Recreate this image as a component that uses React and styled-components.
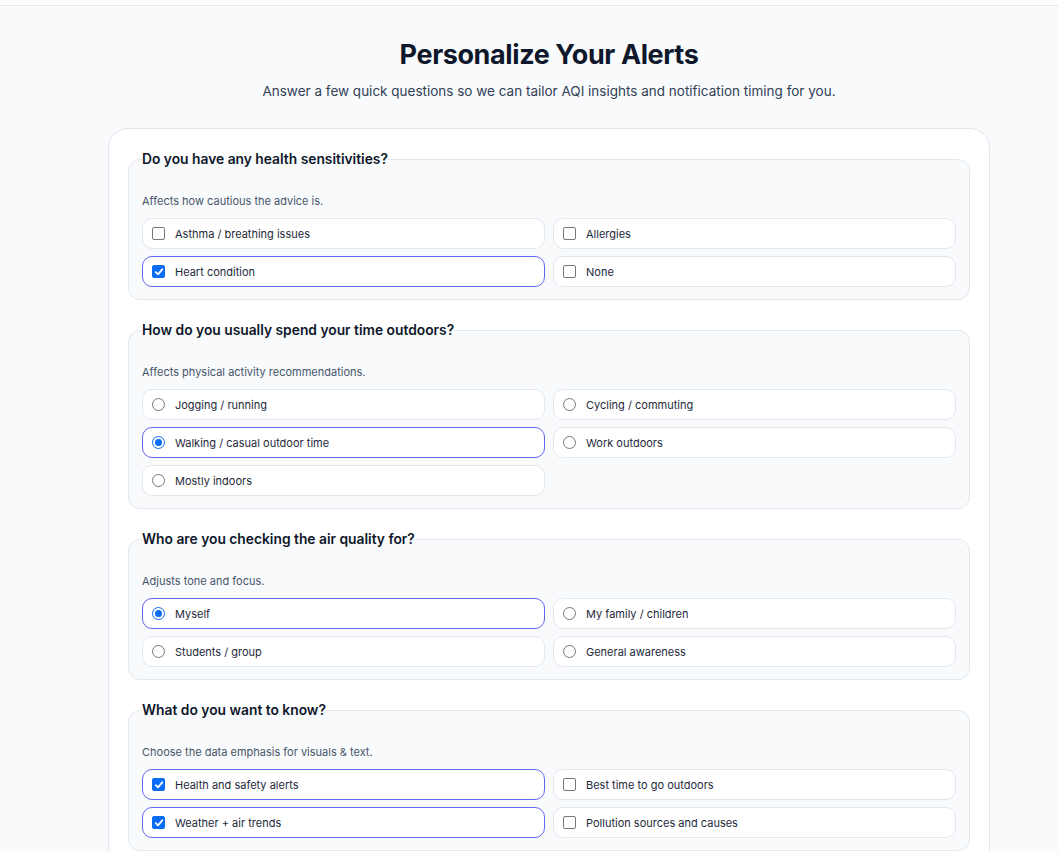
import styled, { createGlobalStyle } from "styled-components";

const GlobalStyle = createGlobalStyle`
  html, body {
    margin: 0;
    padding: 0;
    background: #f8fafc;
    font-family: Inter, "Noto Sans", "Liberation Sans", sans-serif;
    color: #0f172a;
  }
  * {
    box-sizing: border-box;
  }
`;

const TopBar = styled.header`
  height: 6px;
  background: #ffffff;
  border-bottom: 1px solid #e2e8f0;
`;

const Main = styled.main`
  padding: 31px 0 0 40px;
`;

const Title = styled.h1`
  margin: 0;
  text-align: center;
  font-size: 27px;
  line-height: 36px;
  font-weight: 700;
  letter-spacing: -0.4px;
  color: #0f172a;
`;

const Subtitle = styled.p`
  margin: 8px 0 0;
  text-align: center;
  font-size: 13.5px;
  line-height: 20px;
  color: #334155;
`;

const Card = styled.form`
  width: 882px;
  margin: 27px auto 0;
  padding: 20px 19px;
  background: #ffffff;
  border: 1px solid #e2e8f0;
  border-radius: 20px;
  display: flex;
  flex-direction: column;
  gap: 20px;
`;

const Group = styled.fieldset`
  margin: 0;
  padding: 24px 13px 12px;
  background: #f8fafc;
  border: 1px solid #e2e8f0;
  border-radius: 12px;
  min-width: 0;
`;

const Legend = styled.legend`
  padding: 0;
  font-size: 13.8px;
  line-height: 20px;
  font-weight: 600;
  color: #0f172a;
`;

const Hint = styled.p`
  margin: 0 0 9px;
  font-size: 11px;
  line-height: 16px;
  color: #475569;
`;

const Options = styled.div`
  display: grid;
  grid-template-columns: 1fr 1fr;
  gap: 7px 8px;
`;

const Option = styled.label`
  display: flex;
  align-items: center;
  gap: 10px;
  height: 31px;
  padding: 0 9px;
  background: #ffffff;
  border: 1px solid ${(p) => (p.$selected ? "#6366f1" : "#e2e8f0")};
  border-radius: 10px;
  font-size: 11px;
  color: #1e293b;
  cursor: pointer;
`;

const Box = styled.span`
  flex: none;
  width: 13px;
  height: 13px;
  border-radius: 2px;
  border: 1px solid ${(p) => (p.$on ? "#0b6cf5" : "#767676")};
  background: ${(p) => (p.$on ? "#0b6cf5" : "#ffffff")};
  display: flex;
  align-items: center;
  justify-content: center;
`;

const Dot = styled.span`
  flex: none;
  width: 13px;
  height: 13px;
  border-radius: 50%;
  border: 1px solid ${(p) => (p.$on ? "#0b6cf5" : "#767676")};
  background: #ffffff;
  display: flex;
  align-items: center;
  justify-content: center;
  &::after {
    content: "";
    display: ${(p) => (p.$on ? "block" : "none")};
    width: 7px;
    height: 7px;
    border-radius: 50%;
    background: #0b6cf5;
  }
`;

function Check() {
  return (
    <svg width="10" height="10" viewBox="0 0 10 10">
      <path d="M1.8 5.2 L4 7.4 L8.3 2.3" fill="none" stroke="#fff" strokeWidth="1.8" strokeLinecap="round" strokeLinejoin="round" />
    </svg>
  );
}

const groups = [
  {
    title: "Do you have any health sensitivities?",
    hint: "Affects how cautious the advice is.",
    type: "checkbox",
    options: ["Asthma / breathing issues", "Allergies", "Heart condition", "None"],
    selected: ["Heart condition"],
  },
  {
    title: "How do you usually spend your time outdoors?",
    hint: "Affects physical activity recommendations.",
    type: "radio",
    options: ["Jogging / running", "Cycling / commuting", "Walking / casual outdoor time", "Work outdoors", "Mostly indoors"],
    selected: ["Walking / casual outdoor time"],
  },
  {
    title: "Who are you checking the air quality for?",
    hint: "Adjusts tone and focus.",
    type: "radio",
    options: ["Myself", "My family / children", "Students / group", "General awareness"],
    selected: ["Myself"],
  },
  {
    title: "What do you want to know?",
    hint: "Choose the data emphasis for visuals & text.",
    type: "checkbox",
    options: ["Health and safety alerts", "Best time to go outdoors", "Weather + air trends", "Pollution sources and causes"],
    selected: ["Health and safety alerts", "Weather + air trends"],
  },
];

function Question({ group }) {
  return (
    <Group>
      <Legend>{group.title}</Legend>
      <Hint>{group.hint}</Hint>
      <Options>
        {group.options.map((opt) => {
          const on = group.selected.includes(opt);
          return (
            <Option key={opt} $selected={on}>
              {group.type === "checkbox" ? (
                <Box $on={on}>{on && <Check />}</Box>
              ) : (
                <Dot $on={on} />
              )}
              {opt}
            </Option>
          );
        })}
      </Options>
    </Group>
  );
}

export default function App() {
  return (
    <>
      <GlobalStyle />
      <TopBar />
      <Main>
        <Title>Personalize Your Alerts</Title>
        <Subtitle>
          Answer a few quick questions so we can tailor AQI insights and notification timing for you.
        </Subtitle>
        <Card>
          {groups.map((g) => (
            <Question key={g.title} group={g} />
          ))}
        </Card>
      </Main>
    </>
  );
}
